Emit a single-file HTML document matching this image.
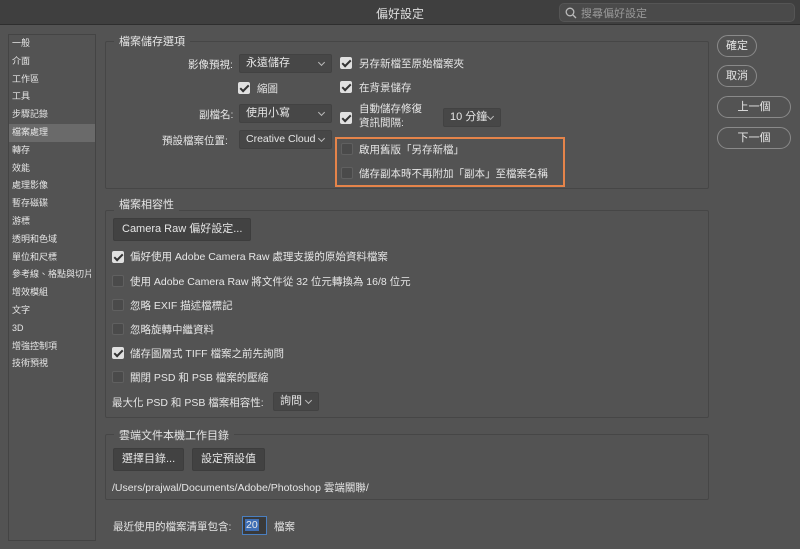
<!DOCTYPE html>
<html><head><meta charset="utf-8"><style>
*{margin:0;padding:0;box-sizing:border-box}
body{width:800px;height:549px;background:#535353;font-family:"Liberation Sans","Noto Sans CJK TC",sans-serif;color:#e6e6e6;font-size:10.5px;position:relative;overflow:hidden}
.a{position:absolute;white-space:nowrap}
.title{left:0;top:0;width:800px;height:25px;background:#3f3f3f;border-bottom:1px solid #2e2e2e}
.side{left:8px;top:34px;width:88px;height:507px;border:1px solid #444;background:#535353}
.side div{height:17.8px;line-height:17.8px;padding-left:3px;font-size:9px}
.side .sel{background:#6a6a6a}
.grp{border:1px solid #464646;border-radius:2px}
.gt{background:#535353;padding:0 5px;font-size:11px}
.dd{background:#474747;border:1px solid #424242;border-radius:2px;height:19px;line-height:17px;padding-left:6px;font-size:11px}
.dd:after{content:"";position:absolute;right:7px;top:5px;width:4px;height:4px;border:solid #bbb;border-width:0 1px 1px 0;transform:rotate(45deg)}
.cb{width:12px;height:12px;border-radius:2px;background:#4a4a4a;border:1px solid #606060}
.cb.on{background:#e0e0e0;border-color:#e0e0e0}
.cb.on:after{content:"";position:absolute;left:3px;top:0px;width:3px;height:7px;border:solid #333;border-width:0 2px 2px 0;transform:rotate(45deg)}
.btn{background:#424242;border:1px solid #3d3d3d;border-radius:2px;height:23px;line-height:21px;padding:0 8px;font-size:11px}
.rb{border:1px solid #8a8a8a;border-radius:12px;height:22px;line-height:20px;text-align:center;font-size:11px}
.t{font-size:10.5px}
</style></head><body>
<div class="a title"></div>
<div class="a" style="left:0;width:800px;top:5px;text-align:center;font-size:12px;color:#ddd">偏好設定</div>
<div class="a" style="left:559px;top:3px;width:236px;height:19px;background:#4a4a4a;border:1px solid #555;border-radius:5px"></div>
<svg class="a" style="left:565px;top:7px" width="12" height="12"><circle cx="5" cy="5" r="3.8" fill="none" stroke="#bbb" stroke-width="1.3"/><line x1="8" y1="8" x2="11" y2="11" stroke="#bbb" stroke-width="1.3"/></svg>
<div class="a" style="left:581px;top:5px;font-size:11px;color:#999">搜尋偏好設定</div>

<div class="a side">
<div>一般</div><div>介面</div><div>工作區</div><div>工具</div><div>步驟記錄</div><div class="sel">檔案處理</div><div>轉存</div><div>效能</div><div>處理影像</div><div>暫存磁碟</div><div>游標</div><div>透明和色域</div><div>單位和尺標</div><div>參考線、格點與切片</div><div>增效模組</div><div>文字</div><div>3D</div><div>增強控制項</div><div>技術預視</div>
</div>

<div class="a grp" style="left:105px;top:41px;width:604px;height:148px"></div>
<div class="a gt" style="left:114px;top:33px">檔案儲存選項</div>
<div class="a t" style="left:188px;top:57px">影像預視:</div>
<div class="a dd" style="left:239px;top:54px;width:93px">永遠儲存</div>
<div class="a cb on" style="left:238px;top:82px"></div><div class="a t" style="left:257px;top:81px">縮圖</div>
<div class="a t" style="left:199px;top:107px">副檔名:</div>
<div class="a dd" style="left:239px;top:104px;width:93px">使用小寫</div>
<div class="a t" style="left:162px;top:133px">預設檔案位置:</div>
<div class="a dd" style="left:239px;top:130px;width:93px;font-size:10.5px">Creative Cloud</div>
<div class="a cb on" style="left:340px;top:57px"></div><div class="a t" style="left:359px;top:56px">另存新檔至原始檔案夾</div>
<div class="a cb on" style="left:340px;top:81px"></div><div class="a t" style="left:359px;top:80px">在背景儲存</div>
<div class="a cb on" style="left:340px;top:112px"></div><div class="a t" style="left:359px;top:102px;line-height:14px">自動儲存修復<br>資訊間隔:</div>
<div class="a dd" style="left:443px;top:108px;width:58px">10 分鐘</div>
<div class="a" style="left:335px;top:137px;width:230px;height:50px;border:2px solid #e5844a"></div>
<div class="a cb" style="left:341px;top:143px"></div><div class="a t" style="left:359px;top:142px">啟用舊版「另存新檔」</div>
<div class="a cb" style="left:341px;top:167px"></div><div class="a t" style="left:359px;top:166px">儲存副本時不再附加「副本」至檔案名稱</div>

<div class="a rb" style="left:717px;top:35px;width:40px">確定</div>
<div class="a rb" style="left:717px;top:65px;width:40px">取消</div>
<div class="a rb" style="left:717px;top:96px;width:74px">上一個</div>
<div class="a rb" style="left:717px;top:127px;width:74px">下一個</div>

<div class="a grp" style="left:105px;top:210px;width:604px;height:208px"></div>
<div class="a gt" style="left:114px;top:196px">檔案相容性</div>
<div class="a btn" style="left:113px;top:218px">Camera Raw 偏好設定...</div>
<div class="a cb on" style="left:112px;top:251px"></div><div class="a t" style="left:130px;top:249px">偏好使用 Adobe Camera Raw 處理支援的原始資料檔案</div>
<div class="a cb" style="left:112px;top:275px"></div><div class="a t" style="left:130px;top:274px">使用 Adobe Camera Raw 將文件從 32 位元轉換為 16/8 位元</div>
<div class="a cb" style="left:112px;top:299px"></div><div class="a t" style="left:130px;top:298px">忽略 EXIF 描述檔標記</div>
<div class="a cb" style="left:112px;top:323px"></div><div class="a t" style="left:130px;top:322px">忽略旋轉中繼資料</div>
<div class="a cb on" style="left:112px;top:347px"></div><div class="a t" style="left:130px;top:346px">儲存圖層式 TIFF 檔案之前先詢問</div>
<div class="a cb" style="left:112px;top:371px"></div><div class="a t" style="left:130px;top:370px">關閉 PSD 和 PSB 檔案的壓縮</div>
<div class="a t" style="left:112px;top:395px">最大化 PSD 和 PSB 檔案相容性:</div>
<div class="a dd" style="left:273px;top:392px;width:46px">詢問</div>

<div class="a grp" style="left:105px;top:434px;width:604px;height:66px"></div>
<div class="a gt" style="left:114px;top:427px">雲端文件本機工作目錄</div>
<div class="a btn" style="left:113px;top:448px">選擇目錄...</div>
<div class="a btn" style="left:192px;top:448px">設定預設值</div>
<div class="a t" style="left:112px;top:480px">/Users/prajwal/Documents/Adobe/Photoshop 雲端關聯/</div>

<div class="a t" style="left:113px;top:519px">最近使用的檔案清單包含:</div>
<div class="a" style="left:242px;top:516px;width:25px;height:19px;background:#3a3a3a;border:1px solid #4a7fc0"></div>
<div class="a t" style="left:245px;top:519px;background:#3f6fb5;padding:0 1px">20</div>
<div class="a t" style="left:274px;top:519px">檔案</div>
</body></html>
